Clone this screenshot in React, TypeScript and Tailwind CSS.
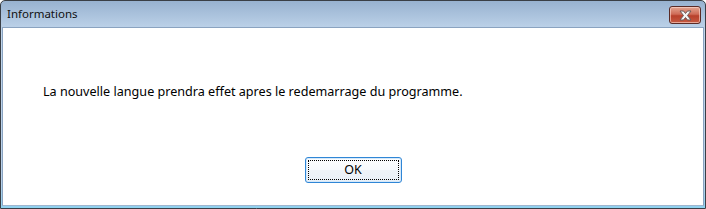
export default function App() {
  return (
    <div
      className="flex h-[209px] w-[706px] flex-col overflow-hidden rounded-t-[5px] border border-[#3a3f46] bg-[linear-gradient(to_bottom,#98b2d0,#c0d5eb_30px,#b9d1ea_180px,#8fd2f0)]"
      style={{ fontFamily: '"Noto Sans", "DejaVu Sans", sans-serif' }}
    >
      <div className="flex h-[26px] shrink-0 items-center justify-between pl-[6px] pr-[4px]">
        <span className="text-[11.5px] leading-none text-[#101010]">Informations</span>
        <button
          type="button"
          className="mt-[2px] flex h-[18px] w-[32px] items-center justify-center rounded-[3px] border border-[#5a2b26] bg-[linear-gradient(to_bottom,#e3a590,#cf6b57_45%,#b8402b_55%,#c65a42)] shadow-[inset_0_0_0_1px_rgba(255,220,210,0.6)]"
        >
          <svg width="15" height="11" viewBox="0 0 15 11">
            <path
              d="M2 1 L5.5 1 L7.5 3.5 L9.5 1 L13 1 L9.5 5.5 L13 10 L9.5 10 L7.5 7.5 L5.5 10 L2 10 L5.5 5.5 Z"
              fill="#f4f4f4"
              stroke="#6b5a5a"
              strokeWidth="1"
              strokeLinejoin="round"
            />
          </svg>
        </button>
      </div>
      <div className="mx-[1px] mb-[2px] flex flex-1 flex-col border border-[#8aa3c0] border-b-[#9fb6cf] bg-white">
        <p className="ml-[40px] mt-[56px] text-[12.6px] leading-[16px] text-black">
          La nouvelle langue prendra effet apres le redemarrage du programme.
        </p>
        <div className="mt-[57px] flex justify-center">
          <button
            type="button"
            className="h-[26px] w-[97px] rounded-[3px] border border-[#2f86d6] bg-[linear-gradient(to_bottom,#fdfeff,#f6f9fc_50%,#eef3f8_51%,#e9f0f7)] p-[2px] shadow-[inset_0_0_0_1px_#d4e8fa]"
          >
            <span className="flex h-full w-full items-center justify-center border border-dotted border-black text-[12.5px] text-black">
              OK
            </span>
          </button>
        </div>
      </div>
    </div>
  );
}
